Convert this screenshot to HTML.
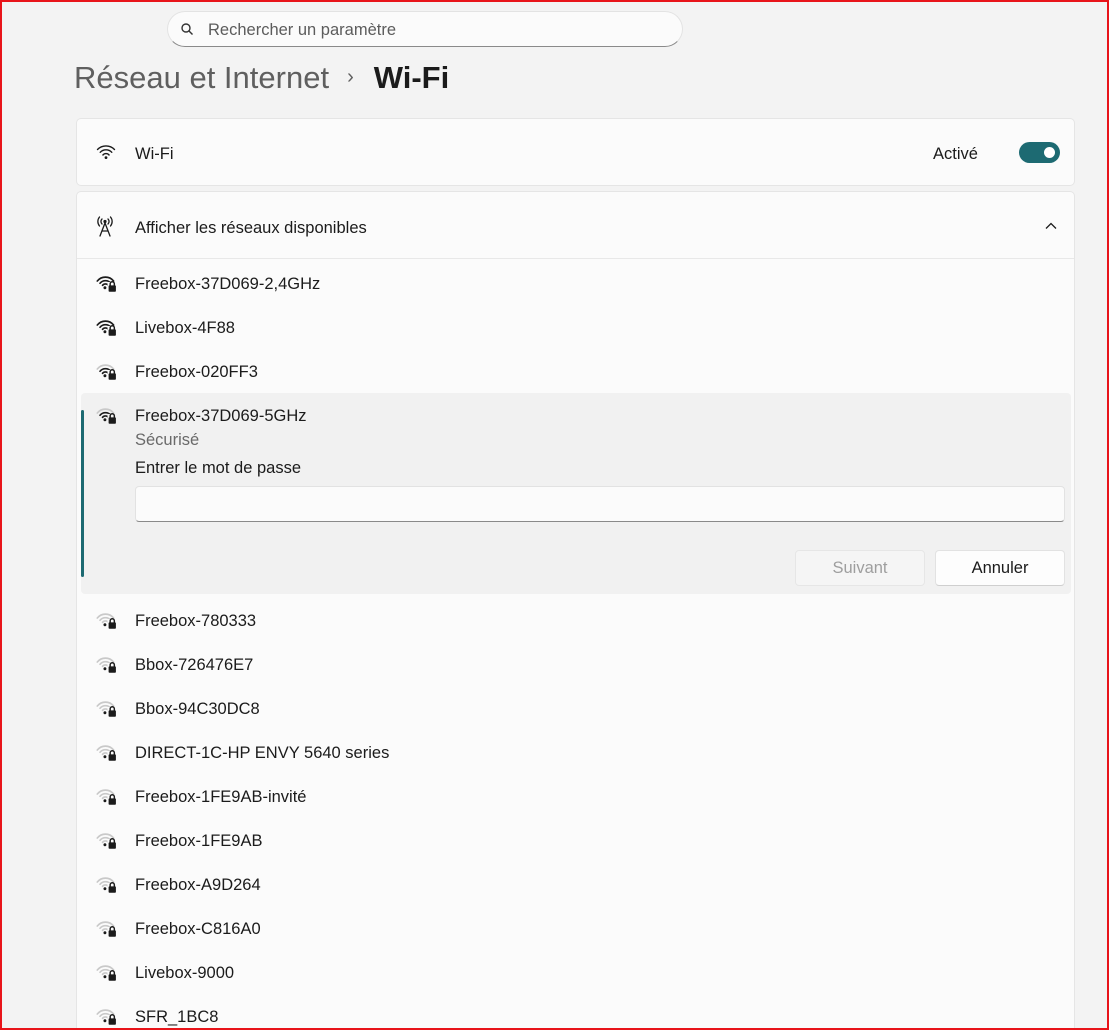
<!DOCTYPE html>
<html><head><meta charset="utf-8"><style>
*{box-sizing:border-box;margin:0;padding:0}
html,body{width:1109px;height:1030px;overflow:hidden}
body{background:#f3f3f3;font-family:"Liberation Sans",sans-serif;color:#1b1b1b;position:relative}
.frame{position:absolute;left:0;top:0;width:1109px;height:1030px;border:2px solid #e8141a;z-index:10;pointer-events:none}
.search{position:absolute;left:167px;top:11px;width:516px;height:36px;background:#fbfbfb;border:1px solid #e3e3e3;border-bottom:1px solid #8a8a8a;border-radius:18px}
.search span{position:absolute;left:40px;top:9px;font-size:16.5px;color:#5c5c5c}
.title{position:absolute;left:74px;top:60px;font-size:31px;color:#5f5f5f;white-space:nowrap}
.title b{color:#1b1b1b;font-weight:bold}
.title i{font-style:normal;font-size:20px;margin:0 20px 0 18px;position:relative;top:-5px}
.card{position:absolute;left:76px;width:999px;background:#fbfbfb;border:1px solid #e5e5e5;border-radius:5px}
.t{position:absolute;font-size:16.5px;white-space:nowrap}
.row{position:absolute;left:0;width:999px;height:44px}
.row svg{position:absolute;left:18px;top:11px}
.row .t{left:58px;top:14px}
.exp{position:absolute;left:4px;top:201px;width:990px;height:201px;background:#f1f1f1;border-radius:4px}
.bar{position:absolute;left:4px;top:218px;width:3px;height:167px;background:#1d6a72;border-radius:2px}
</style></head><body>
<div class="frame"></div>
<div class="search">
<svg style="position:absolute;left:12px;top:10px" width="14" height="14" viewBox="0 0 14 14"><circle cx="6" cy="6" r="4" fill="none" stroke="#333" stroke-width="1.4"/><path d="M9 9l3.5 3.5" stroke="#333" stroke-width="1.4"/></svg>
<span>Rechercher un paramètre</span></div>
<div class="title">Réseau et Internet<i>›</i><b>Wi-Fi</b></div>

<div class="card" style="top:118px;height:68px">
<svg style="position:absolute;left:19px;top:25px" width="20" height="16" viewBox="0 0 20 16"><g fill="none" stroke="#1b1b1b" stroke-width="1.4" stroke-linecap="round"><path d="M1.5 5.5a12 12 0 0 1 17 0"/><path d="M4.2 8.3a8 8 0 0 1 11.6 0"/><path d="M6.9 11a4 4 0 0 1 6.2 0"/></g><circle cx="10" cy="13.6" r="1.4" fill="#1b1b1b"/></svg>
<div class="t" style="left:58px;top:26px">Wi-Fi</div>
<div class="t" style="left:856px;top:26px">Activé</div>
<div style="position:absolute;left:942px;top:23px;width:41px;height:21px;border-radius:11px;background:#1d6a72"><div style="position:absolute;right:5px;top:5px;width:11px;height:11px;border-radius:50%;background:#fff"></div></div>
</div>

<div class="card" style="top:191px;height:860px">
<svg style="position:absolute;left:19px;top:23px" width="18" height="22" viewBox="0 0 18 22"><g fill="none" stroke="#1b1b1b" stroke-width="1.3" stroke-linecap="round"><path d="M3.5 2a7 7 0 0 0 0 9"/><path d="M14.5 2a7 7 0 0 1 0 9"/><path d="M6 4a3.5 3.5 0 0 0 0 5"/><path d="M12 4a3.5 3.5 0 0 1 0 5"/><path d="M9 8L4 21M9 8l5 13M6 16h6"/></g><circle cx="9" cy="6.5" r="1.6" fill="#1b1b1b"/></svg>
<div class="t" style="left:58px;top:27px">Afficher les réseaux disponibles</div>
<svg style="position:absolute;left:968px;top:30px" width="12" height="8" viewBox="0 0 12 8"><path d="M1 6.5l5-5 5 5" fill="none" stroke="#1b1b1b" stroke-width="1.3"/></svg>
<div style="position:absolute;left:0;top:66px;width:997px;height:1px;background:#e8e8e8"></div>

<div class="exp"></div><div class="bar"></div>
<div id="rows"></div>
<div class="t" style="left:58px;top:239px;color:#6a6a6a">Sécurisé</div>
<div class="t" style="left:58px;top:267px">Entrer le mot de passe</div>
<div style="position:absolute;left:58px;top:294px;width:930px;height:36px;background:#fbfbfb;border:1px solid #e2e2e2;border-bottom:1px solid #8a8a8a;border-radius:4px"></div>
<div style="position:absolute;left:718px;top:358px;width:130px;height:36px;border:1px solid #e6e6e6;border-radius:4px;background:#f5f5f5;color:#9e9e9e;font-size:16.5px;text-align:center;line-height:34px">Suivant</div>
<div style="position:absolute;left:858px;top:358px;width:130px;height:36px;border:1px solid #e2e2e2;border-bottom-color:#cfcfcf;border-radius:4px;background:#fdfdfd;font-size:16.5px;text-align:center;line-height:34px">Annuler</div>
</div>

<script>
var nets=[["Freebox-37D069-2,4GHz",3,69,"#fbfbfb"],["Livebox-4F88",3,113,"#fbfbfb"],["Freebox-020FF3",2,157,"#fbfbfb"],["Freebox-37D069-5GHz",2,201,"#f1f1f1"]];
var rest=["Freebox-780333","Bbox-726476E7","Bbox-94C30DC8","DIRECT-1C-HP ENVY 5640 series","Freebox-1FE9AB-invité","Freebox-1FE9AB","Freebox-A9D264","Freebox-C816A0","Livebox-9000","SFR_1BC8"];
rest.forEach(function(n,i){nets.push([n,1,406+44*i,"#fbfbfb"]);});
var h="";
nets.forEach(function(n){
 var d="#1b1b1b",l="#c9c9c9";
 var c3=n[1]>=3?d:l,c2=n[1]>=2?d:l,c1=n[1]>=2?d:l;
 h+='<div class="row" style="top:'+n[2]+'px"><svg width="23" height="21" viewBox="0 0 22 20"><g fill="none" stroke-width="1.6" stroke-linecap="round"><path d="M2.2 8.6a10 10 0 0 1 15.6 0" stroke="'+c3+'"/><path d="M4.8 10.7a6.8 6.8 0 0 1 10.4 0" stroke="'+c2+'"/><path d="M7.2 12.7a3.6 3.6 0 0 1 5.6 0" stroke="'+c1+'"/></g><rect x="12" y="9.5" width="9" height="10" fill="'+n[3]+'"/><circle cx="9.5" cy="15" r="1.4" fill="'+d+'"/><rect x="13" y="12.8" width="7" height="6" rx="0.8" fill="'+d+'"/><path d="M14.5 13v-1.7a2 2 0 0 1 4 0V13" fill="none" stroke="'+d+'" stroke-width="1.4"/></svg><div class="t">'+n[0]+'</div></div>';
});
document.getElementById("rows").innerHTML=h;
</script>
</body></html>
